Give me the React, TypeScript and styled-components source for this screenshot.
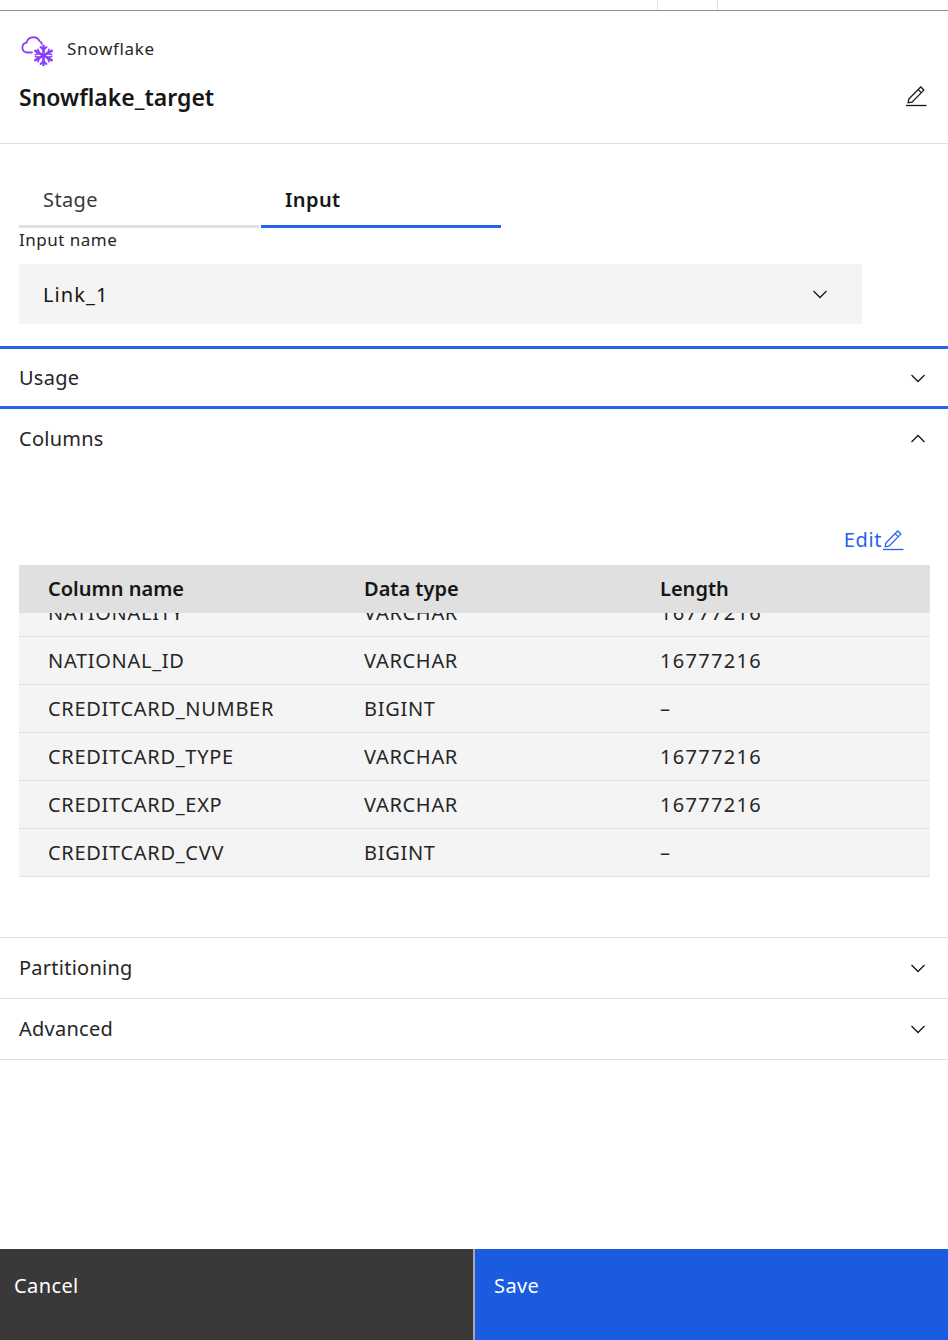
import React from "react";
import styled, { createGlobalStyle } from "styled-components";

const Global = createGlobalStyle`
  html, body { margin: 0; padding: 0; background: #fff; }
  body { font-family: "Noto Sans", "Open Sans", sans-serif; color: #161616; }
  * { box-sizing: border-box; }
`;

const Page = styled.div`
  width: 948px;
  height: 1340px;
  display: flex;
  flex-direction: column;
  overflow: hidden;
  background: #fff;
`;
const TopStrip = styled.div`
  height: 11px;
  flex: none;
  display: flex;
  justify-content: flex-end;
  border-bottom: 1px solid #8d8d8d;
  padding-right: 230px;
`;
const StripCell = styled.div`
  width: 61px;
  border-left: 1px solid #e0e0e0;
  border-right: 1px solid #e0e0e0;
`;
const Header = styled.header`
  height: 133px;
  flex: none;
  border-bottom: 1px solid #e0e0e0;
  padding: 21px 21px 0 19px;
`;
const Kind = styled.div`
  display: flex;
  align-items: center;
  gap: 12px;
  height: 36px;
  font-size: 17px;
  letter-spacing: 0.7px;
  color: #262626;
  margin-left: 1px;
  span { padding-bottom: 3px; }
`;
const TitleRow = styled.div`
  display: flex;
  justify-content: space-between;
  align-items: center;
  margin-top: 14px;
  height: 30px;
  svg { margin-bottom: 3px; }
`;
const Title = styled.h1`
  margin: 0;
  font-size: 23px;
  font-weight: 600;
  line-height: 30px;
  color: #161616;
`;
const Tabs = styled.div`
  display: flex;
  gap: 2px;
  margin: 30px 0 0 19px;
  flex: none;
`;
const Tab = styled.div<{ $active?: boolean }>`
  width: 240px;
  height: 54px;
  padding: 14px 24px 0;
  font-size: 20px;
  line-height: 24px;
  letter-spacing: 0.4px;
  font-weight: ${(p) => (p.$active ? 600 : 400)};
  color: ${(p) => (p.$active ? "#161616" : "#393939")};
  border-bottom: 3px solid ${(p) => (p.$active ? "#2563eb" : "#e0e0e0")};
`;
const FieldLabel = styled.label`
  display: block;
  margin: 2px 0 0 19px;
  height: 20px;
  line-height: 20px;
  font-size: 17px;
  letter-spacing: 0.5px;
  color: #262626;
`;
const Select = styled.div`
  margin: 14px 0 0 19px;
  width: 843px;
  height: 60px;
  flex: none;
  background: #f4f4f4;
  display: flex;
  align-items: center;
  justify-content: space-between;
  padding: 0 34px 0 24px;
  font-size: 20px;
  letter-spacing: 1.1px;
`;
const Section = styled.section<{ $h: number; $focus?: boolean }>`
  height: ${(p) => p.$h}px;
  flex: none;
  display: flex;
  align-items: center;
  justify-content: space-between;
  padding: 0 22px 0 19px;
  font-size: 20px;
  letter-spacing: 0.25px;
  color: #262626;
  border-bottom: 1px solid #e0e0e0;
  span { padding-bottom: ${(p) => (p.$focus ? 0 : 2)}px; }
  ${(p) => p.$focus && "margin-top: 22px; border-top: 3px solid #2563eb; border-bottom: 3px solid #2563eb;"}
`;
const ColumnsHead = styled.div`
  height: 60px;
  flex: none;
  display: flex;
  align-items: center;
  justify-content: space-between;
  padding: 0 22px 0 19px;
  font-size: 20px;
  letter-spacing: 0.25px;
  color: #262626;
  span { padding-bottom: 2px; }
`;
const ColumnsBody = styled.div`
  height: 469px;
  flex: none;
  padding: 57px 18px 0 19px;
  border-bottom: 1px solid #e0e0e0;
`;
const EditRow = styled.div`
  display: flex;
  justify-content: flex-end;
  align-items: center;
  height: 30px;
  padding-right: 26px;
  margin-bottom: 9px;
`;
const EditLink = styled.a`
  display: flex;
  align-items: center;
  font-size: 20px;
  line-height: 28px;
  letter-spacing: 0.6px;
  color: #2563eb;
  padding-bottom: 2px;
`;
const Table = styled.div`
  width: 911px;
`;
const Row = styled.div`
  display: grid;
  grid-template-columns: 316px 296px 1fr;
  padding-left: 29px;
  align-items: center;
`;
const HeadRow = styled(Row)`
  height: 48px;
  background: #e0e0e0;
  font-weight: 600;
  font-size: 20px;
  color: #161616;
  padding-bottom: 2px;
`;
const Scroller = styled.div`
  height: 264px;
  overflow: hidden;
`;
const BodyRow = styled(Row)<{ $clipped?: boolean }>`
  height: 48px;
  background: #f4f4f4;
  border-bottom: 1px solid #e0e0e0;
  color: #262626;
  font-size: 20px;
  letter-spacing: 0.7px;
  ${(p) => p.$clipped && "margin-top: -24px;"}
`;
const NumberCell = styled.span`
  letter-spacing: 1.3px;
`;
const Spacer = styled.div`
  flex: 1;
`;
const Footer = styled.footer`
  height: 91px;
  flex: none;
  display: grid;
  grid-template-columns: 473px 2px 473px;
  font-size: 20px;
  letter-spacing: 0.4px;
  color: #fff;
`;
const FooterButton = styled.button<{ $primary?: boolean }>`
  border: 0;
  margin: 0;
  background: ${(p) => (p.$primary ? "#1a5bdf" : "#393939")};
  color: #fff;
  font: inherit;
  letter-spacing: inherit;
  text-align: left;
  padding: 0 0 19px ${(p) => (p.$primary ? "19px" : "14px")};
`;
const FooterDivider = styled.div`
  background: #a8a8a8;
`;

const Chevron = ({ up }: { up?: boolean }) => (
  <svg width="16" height="16" viewBox="0 0 16 16" fill="none" stroke="#161616" strokeWidth="1.3">
    <path d={up ? "M1.5 11 L8 4.5 L14.5 11" : "M1.5 5 L8 11.5 L14.5 5"} />
  </svg>
);

const PencilIcon = ({ color }: { color: string }) => (
  <svg width="22" height="22" viewBox="0 0 22 22" fill="none" stroke={color} strokeWidth="1.3">
    <path d="M1 20.5 H21.5" />
    <path d="M3.2 17.8 L3.8 14 L14.4 3.2 L15.8 2 L18.8 5 L17.6 6.4 L7 17.2 Z" />
    <path d="M13.2 4.6 L16.4 7.6" />
  </svg>
);

const SnowCloud = () => (
  <svg width="35" height="35" viewBox="0 0 35 35" fill="none">
    <path
      d="M12 19.5 H7 A5 5 0 0 1 6.5 9.6 A7 7 0 0 1 19.5 8 Q21.5 8.8 22 11"
      stroke="#8a3ffc"
      strokeWidth="1.8"
      strokeLinecap="round"
    />
    <g stroke="#8a3ffc" strokeLinecap="round" strokeWidth="2.6">
      <path d="M23.5 13 V32" />
      <path d="M15.3 17.8 L31.7 27.2" />
      <path d="M15.3 27.2 L31.7 17.8" />
    </g>
    <g stroke="#8a3ffc" strokeLinecap="round" strokeWidth="1.8">
      <path d="M20.5 14 L23.5 17 L26.5 14" />
      <path d="M20.5 31 L23.5 28 L26.5 31" />
      <path d="M15.5 21.5 L19.5 20.5 L18 16.5" />
      <path d="M31.5 21.5 L27.5 20.5 L29 16.5" />
      <path d="M15.5 23.5 L19.5 24.5 L18 28.5" />
      <path d="M31.5 23.5 L27.5 24.5 L29 28.5" />
    </g>
  </svg>
);

const rows: [string, string, string][] = [
  ["NATIONALITY", "VARCHAR", "16777216"],
  ["NATIONAL_ID", "VARCHAR", "16777216"],
  ["CREDITCARD_NUMBER", "BIGINT", "–"],
  ["CREDITCARD_TYPE", "VARCHAR", "16777216"],
  ["CREDITCARD_EXP", "VARCHAR", "16777216"],
  ["CREDITCARD_CVV", "BIGINT", "–"],
];

export default function App() {
  return (
    <Page>
      <Global />
      <TopStrip>
        <StripCell />
      </TopStrip>
      <Header>
        <Kind>
          <SnowCloud />
          <span>Snowflake</span>
        </Kind>
        <TitleRow>
          <Title>Snowflake_target</Title>
          <PencilIcon color="#161616" />
        </TitleRow>
      </Header>
      <Tabs>
        <Tab>Stage</Tab>
        <Tab $active>Input</Tab>
      </Tabs>
      <FieldLabel>Input name</FieldLabel>
      <Select>
        <span>Link_1</span>
        <Chevron />
      </Select>
      <Section $h={63} $focus>
        <span>Usage</span>
        <Chevron />
      </Section>
      <ColumnsHead>
        <span>Columns</span>
        <Chevron up />
      </ColumnsHead>
      <ColumnsBody>
        <EditRow>
          <EditLink>
            Edit
            <PencilIcon color="#2563eb" />
          </EditLink>
        </EditRow>
        <Table>
          <HeadRow>
            <span>Column name</span>
            <span>Data type</span>
            <span>Length</span>
          </HeadRow>
          <Scroller>
            {rows.map((r, i) => (
              <BodyRow key={r[0]} $clipped={i === 0}>
                <span>{r[0]}</span>
                <span>{r[1]}</span>
                <NumberCell>{r[2]}</NumberCell>
              </BodyRow>
            ))}
          </Scroller>
        </Table>
      </ColumnsBody>
      <Section $h={61}>
        <span>Partitioning</span>
        <Chevron />
      </Section>
      <Section $h={61}>
        <span>Advanced</span>
        <Chevron />
      </Section>
      <Spacer />
      <Footer>
        <FooterButton>Cancel</FooterButton>
        <FooterDivider />
        <FooterButton $primary>Save</FooterButton>
      </Footer>
    </Page>
  );
}
